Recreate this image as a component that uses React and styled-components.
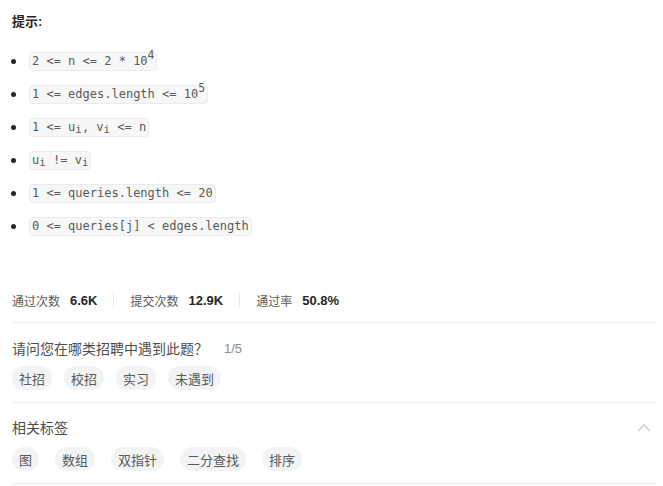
import React from "react";
import styled, { createGlobalStyle } from "styled-components";

const GlobalStyle = createGlobalStyle`
  body {
    margin: 0;
    background: #ffffff;
    font-family: "Liberation Sans", "Noto Sans CJK SC", sans-serif;
  }
`;

const Page = styled.div`
  width: 644px;
  padding: 12px 7px 0 12px;
`;

const Title = styled.div`
  font-size: 13px;
  font-weight: bold;
  line-height: 20px;
  color: #262626;
`;

const HintList = styled.ul`
  list-style: none;
  margin: 19px 0 0;
  padding: 0;
`;

const HintItem = styled.li`
  display: flex;
  align-items: center;
  gap: 13px;
  height: 20px;
  margin-bottom: 13px;
  &::before {
    content: "";
    width: 5px;
    height: 5px;
    border-radius: 50%;
    background: #262626;
    margin-left: -1px;
  }
`;

const Code = styled.code`
  display: inline-block;
  font-family: "DejaVu Sans Mono", "Liberation Mono", monospace;
  font-size: 12px;
  line-height: 17px;
  padding: 0 2px;
  color: #5a5a5a;
  background: #f7f7f8;
  border: 1px solid #ebebeb;
  border-radius: 4px;
  sup {
    font-size: 0.95em;
    vertical-align: 6px;
    line-height: 0;
  }
  sub {
    font-size: 0.9em;
    vertical-align: -2px;
    line-height: 0;
  }
`;

const StatsRow = styled.div`
  display: flex;
  align-items: center;
  height: 20px;
  margin-top: 54px;
  padding-bottom: 12px;
  border-bottom: 1px solid #ededed;
`;

const Stat = styled.div`
  display: flex;
  align-items: center;
  gap: 10px;
`;

const StatLabel = styled.span`
  font-size: 12px;
  color: #595959;
`;

const StatValue = styled.span`
  font-size: 13px;
  font-weight: bold;
  color: #262626;
`;

const StatSep = styled.span`
  width: 1px;
  height: 14px;
  background: #e6e6e6;
  margin: 0 16px;
`;

const Section = styled.div`
  padding-bottom: 12px;
  border-bottom: 1px solid #ededed;
`;

const SectionHead = styled.div`
  display: flex;
  align-items: center;
  justify-content: space-between;
  height: 20px;
  margin-top: ${(p) => p.$top}px;
`;

const HeadLeft = styled.div`
  display: flex;
  align-items: center;
  gap: 16px;
`;

const HeadText = styled.span`
  font-size: 14px;
  color: #4d4d4d;
`;

const Count = styled.span`
  font-size: 13px;
  color: #8c8c8c;
`;

const TagRow = styled.div`
  display: flex;
  gap: ${(p) => p.$gap}px;
  margin-top: ${(p) => p.$top}px;
`;

const Tag = styled.span`
  display: inline-flex;
  align-items: center;
  height: 24px;
  padding: 0 7px;
  border-radius: 12px;
  background: #f2f3f5;
  font-size: 13px;
  color: #595959;
`;

const Chevron = () => (
  <svg width="14" height="9" viewBox="0 0 14 9" style={{ marginRight: 5 }}>
    <polyline points="1,8 7,2 13,8" fill="none" stroke="#cfcfcf" strokeWidth="1.6" />
  </svg>
);

export default function App() {
  const tags1 = ["社招", "校招", "实习", "未遇到"];
  const tags2 = ["图", "数组", "双指针", "二分查找", "排序"];
  return (
    <Page>
      <GlobalStyle />
      <Title>提示:</Title>
      <HintList>
        <HintItem>
          <Code>2 &lt;= n &lt;= 2 * 10<sup>4</sup></Code>
        </HintItem>
        <HintItem>
          <Code>1 &lt;= edges.length &lt;= 10<sup>5</sup></Code>
        </HintItem>
        <HintItem>
          <Code>1 &lt;= u<sub>i</sub>, v<sub>i</sub> &lt;= n</Code>
        </HintItem>
        <HintItem>
          <Code>u<sub>i</sub> != v<sub>i</sub></Code>
        </HintItem>
        <HintItem>
          <Code>1 &lt;= queries.length &lt;= 20</Code>
        </HintItem>
        <HintItem>
          <Code>0 &lt;= queries[j] &lt; edges.length</Code>
        </HintItem>
      </HintList>

      <StatsRow>
        <Stat>
          <StatLabel>通过次数</StatLabel>
          <StatValue>6.6K</StatValue>
        </Stat>
        <StatSep />
        <Stat>
          <StatLabel>提交次数</StatLabel>
          <StatValue>12.9K</StatValue>
        </Stat>
        <StatSep />
        <Stat>
          <StatLabel>通过率</StatLabel>
          <StatValue>50.8%</StatValue>
        </Stat>
      </StatsRow>

      <Section>
        <SectionHead $top={15}>
          <HeadLeft>
            <HeadText>请问您在哪类招聘中遇到此题？</HeadText>
            <Count>1/5</Count>
          </HeadLeft>
        </SectionHead>
        <TagRow $gap={12} $top={8}>
          {tags1.map((t) => (
            <Tag key={t}>{t}</Tag>
          ))}
        </TagRow>
      </Section>

      <Section>
        <SectionHead $top={14}>
          <HeadText>相关标签</HeadText>
          <Chevron />
        </SectionHead>
        <TagRow $gap={16} $top={10}>
          {tags2.map((t) => (
            <Tag key={t}>{t}</Tag>
          ))}
        </TagRow>
      </Section>
    </Page>
  );
}
